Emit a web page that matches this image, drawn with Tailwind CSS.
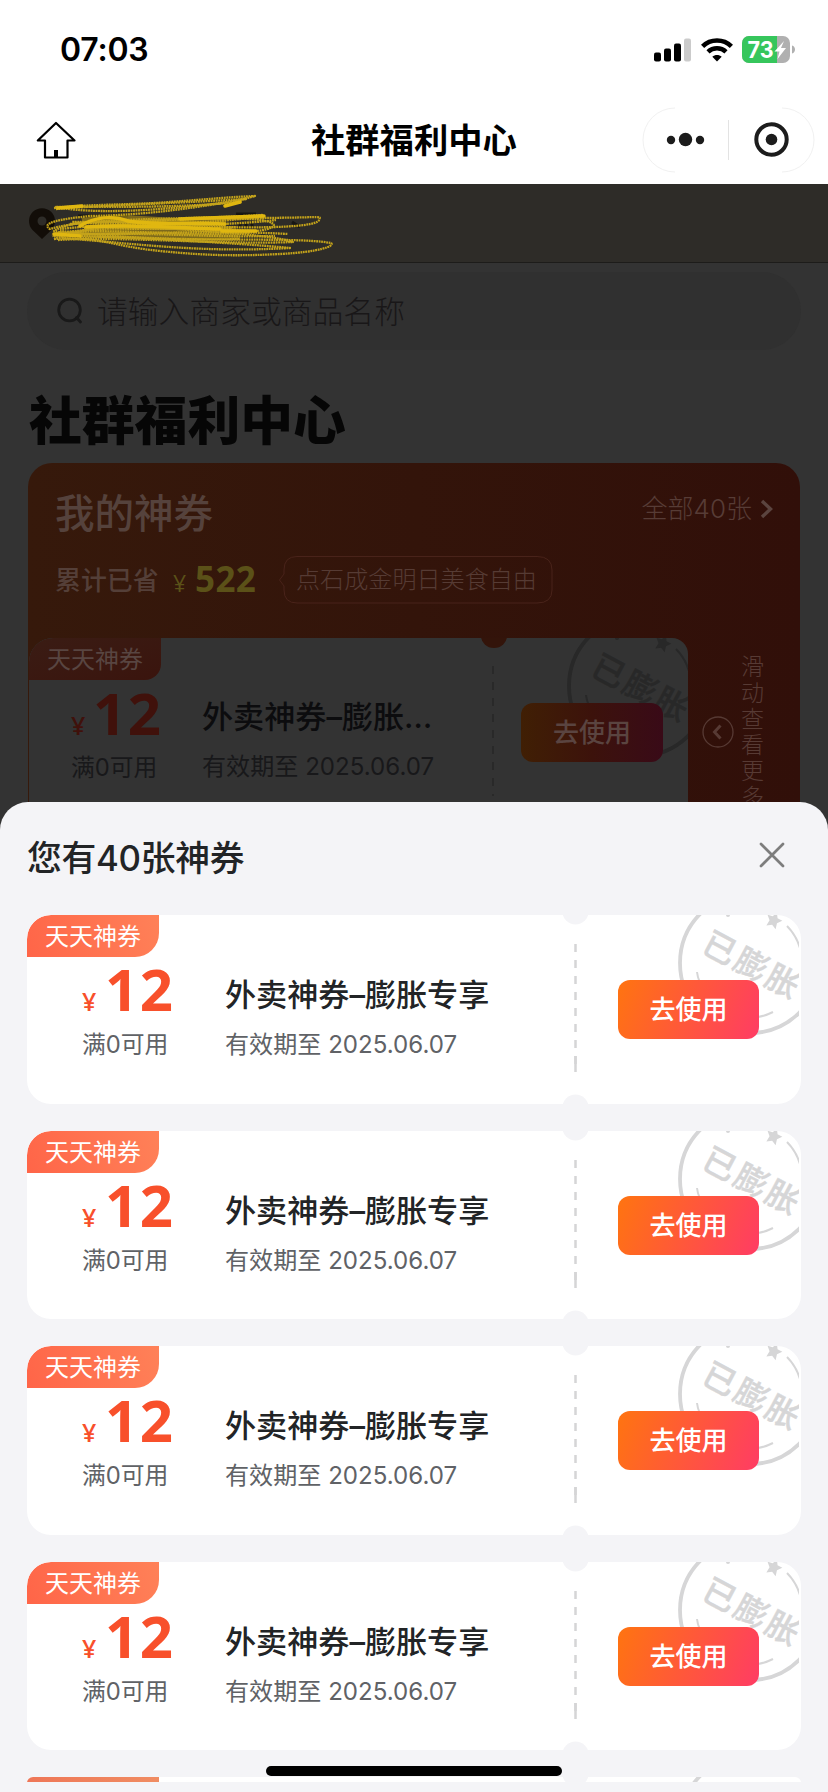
<!DOCTYPE html>
<html lang="zh-CN">
<head>
<meta charset="utf-8">
<title>社群福利中心</title>
<script src="https://cdn.jsdelivr.net/npm/@tailwindcss/browser@4"></script>
</head>
<body class="w-[828px] h-[1792px] overflow-hidden bg-[#333333] font-['Inter','Noto_Sans_CJK_SC',sans-serif]">
<div class="flex flex-col w-[828px] h-[1792px] overflow-hidden">

  <!-- status bar -->
  <header class="bg-white h-[184px] shrink-0 flex flex-col">
    <div class="h-[98px] flex items-center justify-between pl-[60px] pr-[32px] pt-[2px]">
      <span class="text-[32px] leading-[32px] font-semibold tracking-[-0.2px] text-black">07:03</span>
      <div class="flex items-center">
        <svg width="38" height="24" viewBox="0 0 38 24">
          <rect x="0" y="14.500" width="7" height="9" rx="2"/><rect x="10" y="10.500" width="7" height="13" rx="2"/><rect x="20" y="5.500" width="7" height="18" rx="2"/><rect x="30" y="0.500" width="7" height="23" rx="2" fill="#cbcbcb"/>
        </svg>
        <svg class="ml-[9px]" width="32" height="24" viewBox="0 0 32 24" fill="none" stroke="#000" stroke-width="4.500">
          <path d="M1.600 8.300C9.500.500 22.500.500 30.400 8.300"/><path d="M7 13.800c5-4.700 13-4.700 18 0"/><path d="M11.300 18.800c2.600-2.400 6.800-2.400 9.400 0L16 23.500z" fill="#000" stroke="none"/>
        </svg>
        <svg class="ml-[9px]" width="54" height="28" viewBox="0 0 54 28">
          <defs><clipPath id="bat"><rect width="48" height="27" rx="7"/></clipPath></defs>
          <g clip-path="url(#bat)"><rect width="48" height="27" fill="#b0b0b0"/><rect width="35" height="27" fill="#36c65c"/></g>
          <path d="M50 9.500c4 1 4 7 0 8z" fill="#b0b0b0"/>
          <text x="5.500" y="22" font-family="Inter" font-weight="700" font-size="23" fill="#fff" textLength="26" lengthAdjust="spacingAndGlyphs">73</text>
          <path d="M42 5 32.500 15.500h5l-2 7.500 8.500-11h-5z" fill="#fff"/>
        </svg>
      </div>
    </div>
    <div class="h-[84px] flex items-center">
      <svg class="ml-[36px]" width="40" height="40" viewBox="0 0 40 40" fill="none" stroke="#000" stroke-width="2.200" stroke-linejoin="round" stroke-linecap="round">
        <path d="M20 3 1.800 20.500H9V37.500H31.500V20.500H38.500z"/><path d="M18 30h4v7h-4z" fill="#000" stroke="none"/>
      </svg>
      <h1 class="ml-[235px] w-[209px] pt-px text-[34.300px] leading-[40px] font-bold text-black whitespace-nowrap">社群福利中心</h1>
      <svg class="ml-[122px]" width="174" height="66" viewBox="0 0 174 66">
        <path d="M33 1A32 32 0 0 0 33 65M140 1A32 32 0 0 1 140 65" fill="none" stroke="#f1f1f1"/>
        <path d="M86.500 13v40" stroke="#e3e3e3"/>
        <g fill="#1c1c1c"><circle cx="29" cy="33" r="4.200"/><circle cx="43.500" cy="32.500" r="6.700"/><circle cx="58" cy="33" r="4.200"/><circle cx="129.500" cy="32.500" r="5.800"/></g>
        <circle cx="129.500" cy="32.500" r="15.200" fill="none" stroke="#1c1c1c" stroke-width="4"/>
      </svg>
    </div>
  </header>

  <!-- dimmed page -->
  <main class="h-[618px] shrink-0 overflow-hidden flex flex-col bg-[#333333]">
    <div class="h-[79px] shrink-0 bg-[#2e2c28] border-b border-[#1d1c1a]">
      <svg width="400" height="78" viewBox="0 184 400 78" fill="none">
        <path d="M42 239 32.500 230A13 13 0 1 1 51.500 230z" fill="#120d08"/><circle cx="42" cy="221" r="4.500" fill="#2e2c28"/>
        <path d="M78 216h50M236 214h20M240 222v6M246 222v6M252 221v7M292 222l8 5" stroke="#171613" stroke-width="3"/>
        <path d="M82 221C130 214 160 223 226 222M86 228C130 231 190 229 236 229M60 235C120 231 200 238 240 236" stroke="#a88a16" stroke-width="6" stroke-opacity=".65"/>
        <g stroke="#c4a31b" stroke-width="2.300" stroke-dasharray="1.800 .7" stroke-linejoin="round">
          <path d="M54 208C90 204 130 205 170 202S230 197 255 196C235 202 200 206 160 209S80 212 56 207C100 206 160 209 242 202"/>
          <path d="M56 209C110 205 160 204 246 199C200 207 150 215 90 216C60 219 40 223 50 229C90 217 180 220 262 215C220 226 120 222 60 229"/>
          <path d="M54 239C90 226 150 218 240 218S320 215 319 220C317 229 230 229 160 224S70 222 54 231C80 239 180 228 288 234"/>
          <path d="M54 239C100 236 110 246 160 251S240 256 280 254S335 246 331 243C290 236 190 244 54 234C100 225 220 227 276 220"/>
          <path d="M58 240C120 236 220 245 293 242C270 234 190 230 72 222C100 221 170 228 256 231C290 227 270 218 240 219C130 217 120 225 52 236"/>
          <path d="M70 224C130 221 180 219 265 218M54 236C130 230 200 238 275 236M62 238C140 244 200 253 290 248C230 242 130 239 60 231"/>
          <path d="M88 221C130 222 190 225 226 225M90 226C130 232 190 226 228 231M84 228C120 224 170 232 232 228M70 232C120 229 180 236 250 233M80 238C130 235 180 241 240 239"/>
        </g>
        <g stroke="#e0b710" stroke-width="3.500" stroke-linecap="round">
          <path d="M58 208 82 206M80 226C95 216 115 216 128 221C150 225 190 222 225 224M86 227C140 224 180 228 220 229M222 231 256 231M180 219 264 216M54 234 80 236M225 206 240 202"/>
        </g>
      </svg>
    </div>
    <div class="mt-[9px] mx-[27px] h-[78px] shrink-0 rounded-full bg-[#303030] flex items-center pl-[30px]">
      <svg width="26" height="28" viewBox="0 0 26 28" fill="none" stroke="#191919" stroke-width="2.800" stroke-linecap="round"><circle cx="12.500" cy="13" r="10.800"/><path d="m19.500 20.500 4 4.500"/></svg>
      <span class="ml-[14px] pt-px text-[30.800px] leading-[40px] font-light text-[#191718]">请输入商家或商品名称</span>
    </div>
    <h2 class="mt-[34px] ml-[29px] h-[72px] shrink-0 text-[52.800px] leading-[74px] font-black text-[#060606] whitespace-nowrap">社群福利中心</h2>

    <section class="mt-[7px] ml-[28px] w-[772px] h-[400px] shrink-0 rounded-t-[24px] bg-linear-to-r from-[#36190b] via-[#33140a] to-[#310f09] flex flex-col">
      <div class="h-[88px] pt-[6px] flex items-center justify-between pl-[27px] pr-[26px]">
        <h3 class="text-[39.500px] leading-[44px] font-medium text-[#55423c] mt-2">我的神券</h3>
        <div class="flex items-center text-[#573c36] text-[26px] leading-[30px] font-light -mt-[3px]">全部40张
          <svg class="ml-[8px]" width="14" height="20" viewBox="0 0 14 20" fill="none" stroke="#5b443f" stroke-width="3.400"><path d="m2 2 8.500 8L2 18"/></svg>
        </div>
      </div>
      <div class="h-[87px] flex items-start pt-[5px] pl-[27px]">
        <span class="w-[103px] mt-[7px] text-[25.900px] leading-[36px] font-medium text-[#543f38] whitespace-nowrap">累计已省</span>
        <span class="ml-[15px] mt-[8px] w-[22px] text-[23px] leading-[38px] font-['Open_Sans'] text-[#5b5118]">¥</span>
        <span class="w-[80px] mt-[3px] text-[35px] leading-[40px] font-bold font-['Open_Sans'] text-[#5b5118] tracking-[0.400px]">522</span>
        <div class="relative w-[274px] h-[48px] ml-[4px]">
          <svg class="absolute inset-0" width="274" height="48" viewBox="0 0 274 48" fill="none" stroke="#49231a"><path d="M18 .5H258Q273 .5 273 14V34Q273 47 258 47H18Q5 47 5 34V30L.5 24 5 18V14Q5 .5 18 .5z"/></svg>
          <span class="block pl-[17px] text-[24.100px] leading-[47px] font-light text-[#563b34] whitespace-nowrap">点石成金明日美食自由</span>
        </div>
      </div>
      <div class="flex pl-px">
        <div class="relative w-[659px] h-[188px] rounded-tl-[24px] rounded-tr-[16px] bg-[#333333] overflow-hidden flex">
          <svg class="absolute left-0 top-0" width="659" height="188" viewBox="113 0 659 188" fill="none"><use href="#stampShape" color="#282828"/><ellipse cx="578" cy="-2" rx="13" ry="12" fill="#33140a"/><path d="M577 28v130" stroke="#272727" stroke-width="1.500" stroke-dasharray="8 8"/></svg>
          <div class="w-[173px] shrink-0">
            <div class="w-[132px] h-[42px] rounded-tl-[24px] rounded-br-[16px] bg-linear-to-br from-[#3a1c14] to-[#3a140d] text-center text-[24px] leading-[43px] text-[#584541]">天天神券</div>
            <div class="pl-[42px] mt-[7px] h-[52px] flex items-baseline text-[#40110b] font-['Open_Sans']"><span class="w-[22px] text-[25px] font-semibold">¥</span><span class="text-[58px] leading-[52px] font-bold tracking-[1.500px]">12</span></div>
            <div class="pl-[42px] mt-[10px] text-[23.800px] leading-[37px] text-[#18181a]">满0可用</div>
          </div>
          <div class="w-[319px] pt-[57px]">
            <div class="text-[31.100px] leading-[44px] font-medium text-[#0c0c0e] whitespace-nowrap">外卖神券–膨胀…</div>
            <div class="mt-[10px] text-[24.100px] leading-[36px] text-[#18181a] whitespace-nowrap">有效期至 2025.06.07</div>
          </div>
          <div class="relative mt-[65px] w-[142px] h-[59px] rounded-[12px] bg-linear-to-r from-[#401f04] via-[#3c120b] to-[#390a17] text-center text-[26px] leading-[60px] font-medium text-[#5a4440]">去使用</div>
        </div>
        <div class="flex pl-[14px]">
          <svg class="mt-[78px]" width="32" height="32" viewBox="0 0 32 32" fill="none" stroke="#573a34"><circle cx="16" cy="16" r="15" stroke-width="1.300"/><path d="m18.500 9.500-6 6.500 6 6.500" stroke-width="3"/></svg>
          <div class="ml-[7px] pt-[16px] w-[24px] text-[23px] leading-[26px] font-light text-[#573a34] break-all">滑动查看更多</div>
        </div>
      </div>
    </section>
  </main>

  <!-- coupon sheet -->
  <div class="bg-[#333333] h-[990px] shrink-0">
  <section class="rounded-t-[28px] bg-[#f4f4f7] h-[990px] relative">
    <div class="h-[113px] px-[27px] flex items-center justify-between">
      <h2 class="text-[34.800px] leading-[44px] font-medium text-[#222426] tracking-[-0.300px] -mt-[2px]">您有40张神券</h2>
      <svg class="mr-[16px] -mt-[7px]" width="26" height="26" viewBox="0 0 26 26" fill="none" stroke="#7d7d7d" stroke-width="2.700" stroke-linecap="round"><path d="m2 2 22 22M24 2 2 24"/></svg>
    </div>
    <div id="list" class="mx-[27px] h-[867px] overflow-hidden flex flex-col gap-[27px]"></div>
    <div class="absolute left-[266px] top-[964px] w-[296px] h-[10px] rounded-full bg-black"></div>
  </section>
  </div>
</div>

<svg class="hidden" width="0" height="0">
  <defs>
    <g id="stampShape">
      <circle cx="723" cy="48" r="70" fill="none" stroke="currentColor" stroke-width="3.800"/>
      <path d="M760 11A53 53 0 0 1 773 33M670 57Q670.500 62 673 68M731 102Q738 101 746 97" fill="none" stroke="currentColor" stroke-width="2"/>
      <path transform="translate(747 5) rotate(22)" fill="currentColor" d="M0-8 2.600-3 8-2.500 4 2 5 8 0 5-5 8-4 2-8-2.500-2.600-3z"/>
      <circle cx="701" cy="0" r="2" fill="currentColor"/>
      <text transform="translate(725 51) rotate(28)" text-anchor="middle" y="11" font-family="'Noto Sans CJK SC',sans-serif" font-weight="500" font-size="33" letter-spacing="2.500" fill="currentColor" stroke="currentColor" stroke-width=".4">已膨胀</text>
    </g>
  </defs>
</svg>

<template id="coupon">
  <article class="relative h-[188.500px] shrink-0 rounded-[24px] bg-white overflow-hidden flex">
    <svg class="absolute left-0 top-0" width="772" height="189" viewBox="0 0 772 189" fill="none"><use href="#stampShape" color="#d6d6d7"/><ellipse cx="548.500" cy="-3" rx="13" ry="12.500" fill="#f4f4f7"/><ellipse cx="548.500" cy="192" rx="13" ry="12.500" fill="#f4f4f7"/><path d="M548.500 29v128" stroke="#d5d5d6" stroke-width="2.500" stroke-dasharray="8 8"/><path d="M548.500 141v16" stroke="#d5d5d6" stroke-width="2.500"/></svg>
    <div class="w-[198px] shrink-0">
      <div class="w-[132px] h-[42px] rounded-tl-[24px] rounded-br-[24px] bg-linear-[70deg] from-[#ff6548] to-[#ff8158] text-center text-[24px] leading-[43px] text-white">天天神券</div>
      <div class="pl-[55px] mt-[6px] h-[52px] flex items-baseline text-[#f8502b] font-['Open_Sans']"><span class="w-[23px] text-[25px] font-semibold">¥</span><span class="text-[58px] leading-[52px] font-bold tracking-[1.500px]">12</span></div>
      <div class="pl-[55px] mt-[11px] text-[23.800px] leading-[37px] text-[#606266]">满0可用</div>
    </div>
    <div class="w-[393px] pt-[58px]">
      <div class="text-[31.100px] leading-[44px] font-medium text-[#222426] whitespace-nowrap">外卖神券–膨胀专享</div>
      <div class="mt-[10px] text-[24.100px] leading-[36px] text-[#606266] whitespace-nowrap">有效期至 2025.06.07</div>
    </div>
    <div class="relative mt-[65px] w-[141px] h-[59px] rounded-[12px] bg-linear-[112deg] from-[#ff7410] to-[#ff3c64] text-center text-[26px] leading-[60px] font-medium text-white">去使用</div>
  </article>
</template>
<template id="couponEdge">
  <article class="relative h-[6px] shrink-0 rounded-t-[24px] overflow-hidden bg-white">
    <div class="w-[132px] h-[6px] bg-linear-to-r from-[#ee7657] to-[#f08c62]"></div>
    <svg class="absolute left-0 top-0" width="772" height="6" viewBox="0 0 772 6" fill="none"><ellipse cx="548.500" cy="-3" rx="13" ry="12.500" fill="#f4f4f7"/><circle cx="723" cy="48" r="70" stroke="#d6d6d7" stroke-width="3.800"/></svg>
  </article>
</template>
<script>
  const list = document.getElementById('list');
  const tpl = document.getElementById('coupon');
  for (let i = 0; i < 4; i++) list.appendChild(tpl.content.cloneNode(true));
  list.appendChild(document.getElementById('couponEdge').content.cloneNode(true));
</script>
</body>
</html>
